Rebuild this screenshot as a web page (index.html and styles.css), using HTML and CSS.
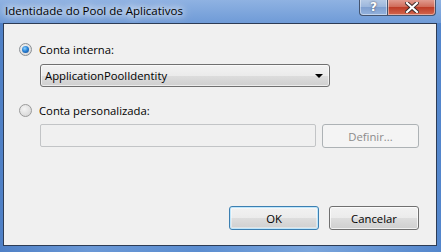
FILE: index.html
```html
<!DOCTYPE html>
<html lang="pt">
<head>
    <meta charset="UTF-8">
    <title>Identidade do Pool de Aplicativos</title>
    <link rel="stylesheet" href="styles.css">
</head>
<body>
    <div class="window">
        <div class="titlebar">
            <div class="title">Identidade do Pool de Aplicativos</div>
            <div class="caption-buttons">
                <div class="cap-btn cap-help">?</div>
                <div class="cap-btn cap-close">
                    <svg width="14" height="11" viewBox="0 0 14 11">
                        <path d="M2 1 L12 10 M12 1 L2 10" stroke="#3a2a2a" stroke-width="4" stroke-linecap="square"/>
                        <path d="M2 1 L12 10 M12 1 L2 10" stroke="#fff" stroke-width="2.2" stroke-linecap="square"/>
                    </svg>
                </div>
            </div>
        </div>
        <div class="client">
            <div class="option">
                <span class="radio checked"></span>
                <span>Conta interna:</span>
            </div>
            <div class="combo">
                <span>ApplicationPoolIdentity</span>
                <span class="arrow"></span>
            </div>
            <div class="option option-second">
                <span class="radio"></span>
                <span>Conta personalizada:</span>
            </div>
            <div class="custom-row">
                <div class="textbox"></div>
                <div class="button disabled">Definir...</div>
            </div>
            <div class="footer">
                <div class="button default">OK</div>
                <div class="button">Cancelar</div>
            </div>
        </div>
    </div>
</body>
</html>
```

FILE: styles.css
```css
html, body {
    margin: 0;
    padding: 0;
}
body {
    font-family: "Open Sans", "Noto Sans", sans-serif;
    font-size: 11.3px;
    color: #000;
    width: 441px;
    height: 252px;
    overflow: hidden;
}
.window {
    width: 441px;
    height: 252px;
    box-sizing: border-box;
    padding: 0 4px 6px 3px;
    display: flex;
    flex-direction: column;
    background: linear-gradient(90deg, #4f80c6 0%, #6a98d6 20%, #5b8dd0 45%, #7aa5dc 70%, #5386cc 100%);
}
.titlebar {
    height: 23px;
    display: flex;
    justify-content: space-between;
    align-items: flex-start;
    background: linear-gradient(180deg, #8fb2e2 0%, #6f9bd7 100%);
    margin: 0 -4px 0 -3px;
    padding: 0 5px 0 5px;
}
.title {
    margin-top: 3px;
    font-size: 11.5px;
    color: #000;
    padding: 0 6px 0 0;
    text-shadow: 0 0 6px #fff, 0 0 10px #fff, 0 0 14px #eef4fc;
}
.caption-buttons {
    display: flex;
    margin-top: -1px;
}
.cap-btn {
    height: 16px;
    border: 1px solid #44546f;
    border-top: none;
    display: flex;
    align-items: center;
    justify-content: center;
    box-shadow: inset 0 0 0 1px rgba(255,255,255,0.45);
}
.cap-help {
    width: 27px;
    border-radius: 0 0 0 4px;
    border-right: none;
    background: linear-gradient(180deg, #b8cce6 0%, #9bb6dc 50%, #7f9fcf 51%, #93b2dd 100%);
    color: #fff;
    font-family: "DejaVu Sans", sans-serif;
    font-weight: bold;
    font-size: 12px;
    text-shadow: 0 0 2px #334;
}
.cap-close {
    width: 47px;
    border-radius: 0 0 4px 0;
    background: linear-gradient(180deg, #e3a196 0%, #cf6a58 50%, #bd3b26 51%, #d2664f 100%);
}
.client {
    flex: 1;
    background-color: #f0f0f0;
    border: 1px solid #2d3c55;
    display: flex;
    flex-direction: column;
    padding: 18px 0 15px 15px;
}
.option {
    display: flex;
    align-items: center;
    height: 15px;
    gap: 7px;
}
.option-second {
    margin-top: 16px;
}
.radio {
    width: 11px;
    height: 11px;
    border-radius: 50%;
    border: 1px solid #9a9a9a;
    background: radial-gradient(circle at 40% 35%, #f4f4f4 0%, #dcdcdc 70%, #cfcfcf 100%);
    position: relative;
    flex: none;
}
.radio.checked {
    border-color: #8a8f94;
}
.radio.checked::after {
    content: "";
    position: absolute;
    left: 2px;
    top: 2px;
    width: 7px;
    height: 7px;
    border-radius: 50%;
    background: radial-gradient(circle at 40% 35%, #8fd3ff 0%, #2a83d6 45%, #0c3f8c 100%);
}
.combo {
    margin-top: 7px;
    margin-left: 21px;
    width: 278px;
    height: 21px;
    border: 1px solid #707070;
    border-radius: 3px;
    background: linear-gradient(180deg, #f2f2f2 0%, #ebebeb 50%, #dddddd 51%, #cfcfcf 100%);
    display: flex;
    align-items: center;
    justify-content: space-between;
    padding: 0 6px 0 4px;
    box-shadow: inset 0 0 0 1px rgba(255,255,255,0.6);
}
.arrow {
    width: 0;
    height: 0;
    border-left: 4px solid transparent;
    border-right: 4px solid transparent;
    border-top: 4px solid #000;
}
.custom-row {
    margin-top: 6px;
    margin-left: 21px;
    display: flex;
    gap: 6px;
}
.textbox {
    width: 274px;
    height: 21px;
    border: 1px solid #c2c4c6;
    border-radius: 2px;
    background-color: #f0f0f0;
}
.button {
    width: 88px;
    height: 22px;
    border: 1px solid #707070;
    border-radius: 3px;
    background: linear-gradient(180deg, #f2f2f2 0%, #ebebeb 50%, #dddddd 51%, #cfcfcf 100%);
    box-shadow: inset 0 0 0 1px rgba(255,255,255,0.7);
    display: flex;
    align-items: center;
    justify-content: center;
}
.button.disabled {
    width: 95px;
    border-color: #adb2b5;
    background: #f4f4f4;
    color: #8b8b8b;
    box-shadow: none;
}
.button.default {
    border-color: #3c7fb1;
    box-shadow: inset 0 0 0 1px #bfe6fb, inset 0 0 0 2px rgba(255,255,255,0.4);
}
.footer {
    margin-top: auto;
    display: flex;
    justify-content: flex-end;
    gap: 10px;
    padding-right: 17px;
}
```
